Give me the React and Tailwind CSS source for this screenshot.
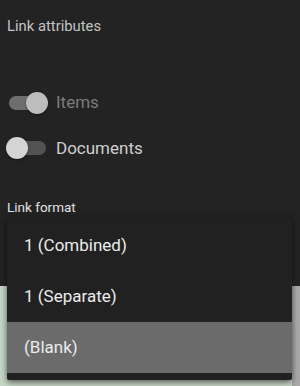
const Toggle = ({ on }) => {
  return (
    <div className="relative w-[42px] h-[22px] flex items-center justify-center">
      <div className={`w-[37px] h-[14px] rounded-full ${on ? "bg-[#6e6e6e]" : "bg-[#525252]"}`} />
      <div
        className={`absolute top-0 w-[22px] h-[22px] rounded-full shadow-[0_1px_2px_rgba(0,0,0,0.5)] ${
          on ? "right-0 bg-[#bdbdbd]" : "left-0 bg-[#d4d4d4]"
        }`}
      />
    </div>
  );
};

const MenuItem = ({ label, active }) => {
  return (
    <div className={`h-[51px] flex items-center px-[17px] text-[17px] text-[#ececec] ${active ? "bg-[#6b6b6b]" : ""}`}>
      {label}
    </div>
  );
};

export default function App() {
  return (
    <div className="relative w-[300px] h-[386px] overflow-hidden flex flex-col font-['Roboto',sans-serif]">
      <div className="h-[286px] bg-[#232323] px-[7px] pt-[16px]">
        <div className="text-[14.8px] leading-[20px] text-[#c4c4c4]">Link attributes</div>
        <div className="mt-[54px] flex items-center gap-[8px] -ml-[1px]">
          <Toggle on />
          <span className="text-[17px] text-[#7c7c7c]">Items</span>
        </div>
        <div className="mt-[20px] flex items-center gap-[8px] -ml-[1px]">
          <Toggle on={false} />
          <span className="text-[17px] text-[#cfcfcf]">Documents</span>
        </div>
        <div className="mt-[37px] text-[13.5px] leading-[18px] text-[#e2e2e2]">Link format</div>
      </div>
      <div className="flex-1 flex">
        <div className="flex-1 bg-[#c6d6c6]" />
        <div className="w-[8px] bg-[#a9a9a9]" />
      </div>
      <div className="absolute left-[7px] top-[217px] w-[285px] bg-[#212121] pt-[3px] pb-[7px] rounded-[2px] shadow-[0_2px_6px_rgba(0,0,0,0.6)]">
        <MenuItem label="1 (Combined)" />
        <MenuItem label="1 (Separate)" />
        <MenuItem label="(Blank)" active />
      </div>
    </div>
  );
}
